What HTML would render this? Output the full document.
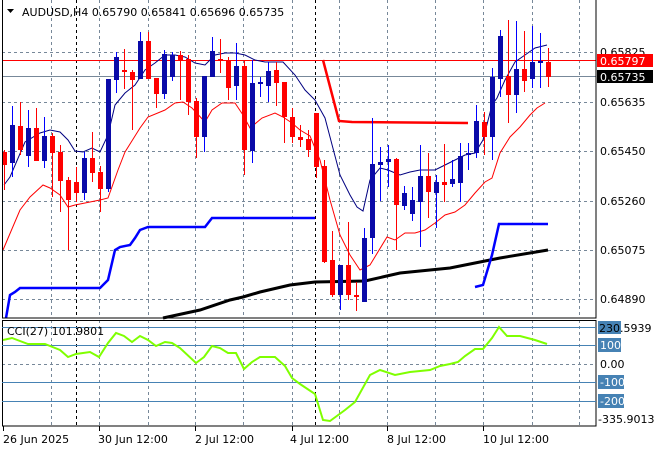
<!DOCTYPE html>
<html><head><meta charset="utf-8"><style>
html,body{margin:0;padding:0;background:#fff;width:660px;height:450px;overflow:hidden}
svg{display:block;font-family:"DejaVu Sans","Liberation Sans",sans-serif;font-size:11px}
</style></head><body>
<svg width="660" height="450" viewBox="0 0 660 450" xmlns="http://www.w3.org/2000/svg">
<rect width="660" height="450" fill="#fff"/>
<g stroke="#778899" stroke-width="1" stroke-dasharray="3,3" fill="none">
<path d="M2 52.5H596M2 102.5H596M2 151.5H596M2 201.5H596M2 250.5H596M2 299.5H596"/>
<path d="M51.5 0V318M99.5 0V318M148.5 0V318M195.5 0V318M243.5 0V318M292.5 0V318M339.5 0V318M387.5 0V318M435.5 0V318M483.5 0V318M532.5 0V318M579.5 0V318"/>
<path d="M51.5 320V426M99.5 320V426M148.5 320V426M195.5 320V426M243.5 320V426M292.5 320V426M339.5 320V426M387.5 320V426M435.5 320V426M483.5 320V426M532.5 320V426M579.5 320V426"/>
<path d="M2 364.5H596"/>
</g>
<g stroke="#000" stroke-width="1" stroke-dasharray="3,3">
<path d="M76.5 0V318M315.5 0V318M76.5 320V426M315.5 320V426"/>
</g>
<path d="M2 60.5H596" stroke="#ff0000"/>
<path d="M2 76.5H596" stroke="#778899"/>
<polyline fill="none" stroke="#000" stroke-width="3" points="163,318 200,310 230,300 243,297 260,292 290,285 315,282 365,281 400,273 450,268 480,262 500,258 548,250"/>
<polyline fill="none" stroke="#0000ff" stroke-width="2.5" points="6,318 10,295 15,292 20,288 100,288 108,280 115,250 120,247 130,245 135,238 140,230 148,227 205,227 212,218 315,218"/>
<polyline fill="none" stroke="#0000ff" stroke-width="2.5" points="475,287 483,285 492,255 499,224 548,224"/>
<polyline fill="none" stroke="#ff0000" stroke-width="2.5" points="323,60 339,121 352,122 468,123"/>
<polyline fill="none" stroke="#ff0000" stroke-width="1" points="3,250 20,210 30,197 43,185 50,188 60,195 68,207 75,205 85,203 100,200 108,198 118,170 125,152 140,128 148,117 165,110 175,103 183,102 192,108 205,122 212,110 222,103 235,103 243,115 250,128 262,118 275,113 283,117 292,123 300,130 310,136 320,160 330,200 340,235 350,255 360,270 370,265 387,237 395,240 405,233 415,233 425,230 435,223 445,215 455,212 465,205 475,193 485,182 492,178 500,153 510,137 520,127 530,115 537,108 545,103"/>
<polyline fill="none" stroke="#000080" stroke-width="1" points="4,185 10,177 25,142 40,133 50,130 60,132 68,140 75,151 83,152 92,148 100,152 108,135 115,105 125,93 135,85 145,70 155,63 165,55 175,55 185,57 195,63 205,65 215,55 225,53 235,53 245,55 255,60 265,62 283,62 295,75 305,90 315,100 325,118 340,175 350,195 357,207 363,211 370,180 380,168 388,170 400,175 410,172 420,170 435,170 445,165 455,160 465,155 475,153 483,140 492,105 497,98 505,80 515,62 525,55 535,48 547,45"/>
<g>
<g fill="#ff0000">
<rect x="4" y="150" width="1" height="40"/><rect x="2" y="152" width="5" height="13"/>
<rect x="20" y="102" width="1" height="53"/><rect x="18" y="126" width="5" height="24"/>
<rect x="36" y="108" width="1" height="53"/><rect x="34" y="128" width="5" height="33"/>
<rect x="52" y="133" width="1" height="64"/><rect x="50" y="136" width="5" height="17"/>
<rect x="60" y="145" width="1" height="67"/><rect x="58" y="152" width="5" height="29"/>
<rect x="68" y="177" width="1" height="73"/><rect x="66" y="180" width="5" height="20"/>
<rect x="76" y="167" width="1" height="35"/><rect x="74" y="182" width="5" height="11"/>
<rect x="92" y="132" width="1" height="50"/><rect x="90" y="158" width="5" height="15"/>
<rect x="100" y="166" width="1" height="46"/><rect x="98" y="172" width="5" height="17"/>
<rect x="124" y="49" width="1" height="40"/><rect x="122" y="70" width="5" height="2"/>
<rect x="132" y="70" width="1" height="60"/><rect x="130" y="72" width="5" height="8"/>
<rect x="148" y="32" width="1" height="47"/><rect x="146" y="41" width="5" height="38"/>
<rect x="156" y="78" width="1" height="30"/><rect x="154" y="78" width="5" height="16"/>
<rect x="180" y="51" width="1" height="49"/><rect x="178" y="55" width="5" height="5"/>
<rect x="188" y="55" width="1" height="60"/><rect x="186" y="59" width="5" height="43"/>
<rect x="196" y="98" width="1" height="60"/><rect x="194" y="101" width="5" height="36"/>
<rect x="220" y="39" width="1" height="34"/><rect x="218" y="59" width="5" height="2"/>
<rect x="228" y="57" width="1" height="43"/><rect x="226" y="60" width="5" height="28"/>
<rect x="244" y="60" width="1" height="115"/><rect x="242" y="66" width="5" height="84"/>
<rect x="276" y="62" width="1" height="44"/><rect x="274" y="70" width="5" height="13"/>
<rect x="284" y="82" width="1" height="61"/><rect x="282" y="82" width="5" height="35"/>
<rect x="292" y="108" width="1" height="35"/><rect x="290" y="117" width="5" height="20"/>
<rect x="300" y="125" width="1" height="22"/><rect x="298" y="137" width="5" height="3"/>
<rect x="308" y="130" width="1" height="27"/><rect x="306" y="139" width="5" height="11"/>
<rect x="316" y="113" width="1" height="65"/><rect x="314" y="113" width="5" height="54"/>
<rect x="324" y="160" width="1" height="103"/><rect x="322" y="166" width="5" height="96"/>
<rect x="332" y="231" width="1" height="66"/><rect x="330" y="260" width="5" height="35"/>
<rect x="348" y="222" width="1" height="78"/><rect x="346" y="265" width="5" height="30"/>
<rect x="356" y="282" width="1" height="29"/><rect x="354" y="295" width="5" height="2"/>
<rect x="396" y="158" width="1" height="92"/><rect x="394" y="159" width="5" height="46"/>
<rect x="428" y="153" width="1" height="65"/><rect x="426" y="176" width="5" height="16"/>
<rect x="444" y="144" width="1" height="58"/><rect x="442" y="182" width="5" height="3"/>
<rect x="484" y="112" width="1" height="43"/><rect x="482" y="122" width="5" height="15"/>
<rect x="508" y="20" width="1" height="103"/><rect x="506" y="76" width="5" height="19"/>
<rect x="524" y="31" width="1" height="61"/><rect x="522" y="69" width="5" height="12"/>
<rect x="548" y="48" width="1" height="39"/><rect x="546" y="62" width="5" height="15"/>
</g>
<g fill="#0000ff">
<rect x="12" y="106" width="1" height="71"/><rect x="28" y="110" width="1" height="57"/>
<rect x="44" y="117" width="1" height="51"/><rect x="84" y="152" width="1" height="48"/>
<rect x="108" y="79" width="1" height="113"/><rect x="116" y="52" width="1" height="41"/>
<rect x="140" y="32" width="1" height="47"/><rect x="164" y="50" width="1" height="49"/>
<rect x="172" y="52" width="1" height="29"/><rect x="204" y="76" width="1" height="76"/>
<rect x="212" y="37" width="1" height="40"/><rect x="236" y="43" width="1" height="57"/>
<rect x="252" y="60" width="1" height="103"/><rect x="260" y="77" width="1" height="20"/>
<rect x="268" y="62" width="1" height="40"/><rect x="340" y="265" width="1" height="45"/>
<rect x="364" y="228" width="1" height="74"/><rect x="372" y="118" width="1" height="136"/>
<rect x="380" y="147" width="1" height="54"/><rect x="388" y="145" width="1" height="42"/>
<rect x="404" y="186" width="1" height="24"/><rect x="412" y="187" width="1" height="34"/>
<rect x="420" y="145" width="1" height="102"/><rect x="436" y="175" width="1" height="53"/>
<rect x="452" y="160" width="1" height="27"/><rect x="460" y="143" width="1" height="59"/>
<rect x="468" y="143" width="1" height="27"/><rect x="476" y="105" width="1" height="53"/>
<rect x="492" y="68" width="1" height="92"/><rect x="500" y="30" width="1" height="67"/>
<rect x="516" y="21" width="1" height="92"/><rect x="532" y="26" width="1" height="62"/>
<rect x="540" y="33" width="1" height="55"/>
</g>
<g fill="#0a0aa8">
<rect x="10" y="125" width="5" height="38"/><rect x="26" y="128" width="5" height="28"/>
<rect x="42" y="136" width="5" height="25"/><rect x="82" y="158" width="5" height="35"/>
<rect x="106" y="79" width="5" height="110"/><rect x="114" y="57" width="5" height="23"/>
<rect x="138" y="41" width="5" height="38"/><rect x="162" y="54" width="5" height="40"/>
<rect x="170" y="55" width="5" height="22"/><rect x="202" y="76" width="5" height="61"/>
<rect x="210" y="51" width="5" height="26"/><rect x="234" y="66" width="5" height="20"/>
<rect x="250" y="83" width="5" height="68"/><rect x="258" y="82" width="5" height="2"/>
<rect x="266" y="71" width="5" height="15"/><rect x="338" y="265" width="5" height="30"/>
<rect x="362" y="238" width="5" height="64"/><rect x="370" y="164" width="5" height="74"/>
<rect x="378" y="162" width="5" height="3"/><rect x="386" y="159" width="5" height="3"/>
<rect x="402" y="193" width="5" height="13"/><rect x="410" y="200" width="5" height="14"/>
<rect x="418" y="176" width="5" height="26"/><rect x="434" y="182" width="5" height="11"/>
<rect x="450" y="179" width="5" height="5"/><rect x="458" y="156" width="5" height="27"/>
<rect x="466" y="153" width="5" height="2"/><rect x="474" y="121" width="5" height="32"/>
<rect x="490" y="77" width="5" height="60"/><rect x="498" y="36" width="5" height="43"/>
<rect x="514" y="69" width="5" height="26"/><rect x="530" y="62" width="5" height="17"/>
<rect x="538" y="61" width="5" height="2"/>
</g>
</g>
<rect x="2.5" y="-1" width="593.5" height="319" fill="none" stroke="#000"/>
<rect x="2.5" y="320.5" width="593.5" height="105.5" fill="none" stroke="#000"/>
<path d="M7 9H14L10.5 13Z" fill="#000"/>
<text x="22" y="16" fill="#000">AUDUSD,H4  0.65790 0.65841 0.65696 0.65735</text>
<g fill="#000">
<text x="600" y="56">0.65825</text>
<text x="600" y="106">0.65635</text>
<text x="600" y="155">0.65450</text>
<text x="600" y="205">0.65260</text>
<text x="600" y="254">0.65075</text>
<text x="600" y="303">0.64890</text>
</g>
<rect x="597" y="54" width="56" height="13" fill="#ff0000"/>
<text x="600" y="65" fill="#fff">0.65797</text>
<rect x="597" y="70" width="56" height="13" fill="#000"/>
<text x="600" y="81" fill="#fff">0.65735</text>
<g stroke="#4682b4" stroke-width="1">
<path d="M2 327.5H596M2 345.5H596M2 382.5H596M2 401.5H596"/>
</g>
<polyline fill="none" stroke="#7fff00" stroke-width="2" points="3,340 12,338 28,344 45,344 60,350 68,357 76,354 90,352 99,357 108,343 116,333 124,336 132,342 140,336 148,340 156,346 165,342 172,343 180,348 196,363 204,357 212,346 220,348 228,353 236,353 244,369 252,362 260,357 275,357 285,366 292,378 300,384 315,394 323,420 330,421 345,410 355,402 370,375 380,370 395,375 410,372 430,370 440,366 450,364 458,362 465,356 475,349 483,349 492,338 499,327 507,336 520,336 535,340 547,344"/>
<text x="7" y="335" fill="#000">CCI(27) 101.9801</text>
<g fill="#4682b4">
<rect x="598" y="321" width="23" height="13"/>
<rect x="598" y="338" width="23" height="14"/>
<rect x="598" y="375" width="26" height="14"/>
<rect x="598" y="394" width="26" height="14"/>
</g>
<text x="599" y="332" fill="#000">230.5939</text>
<text x="600" y="349" fill="#fff">100</text>
<text x="600" y="368" fill="#000">0.00</text>
<text x="600" y="386" fill="#fff">-100</text>
<text x="600" y="405" fill="#fff">-200</text>
<text x="598" y="423" fill="#000">-335.9013</text>
<g stroke="#000"><path d="M3.5 426V431M99.5 426V431M195.5 426V431M292.5 426V431M387.5 426V431M483.5 426V431"/></g>
<g fill="#000">
<text x="3" y="443">26 Jun 2025</text>
<text x="98" y="443">30 Jun 12:00</text>
<text x="195" y="443">2 Jul 12:00</text>
<text x="290" y="443">4 Jul 12:00</text>
<text x="387" y="443">8 Jul 12:00</text>
<text x="483" y="443">10 Jul 12:00</text>
</g>
</svg>
</body></html>
